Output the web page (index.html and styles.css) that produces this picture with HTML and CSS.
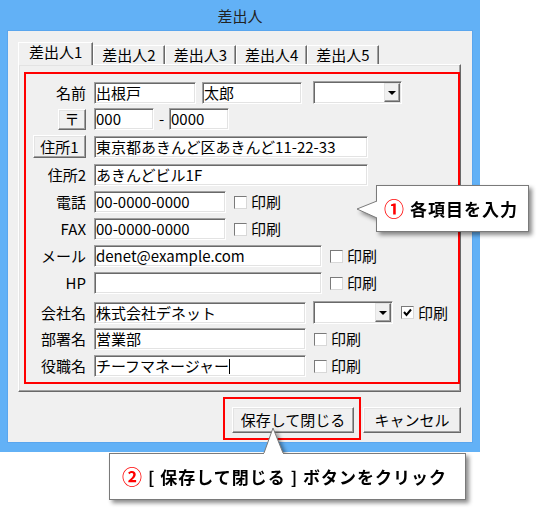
FILE: index.html
```html
<!DOCTYPE html>
<html lang="ja">
<head>
    <meta charset="UTF-8">
    <title>差出人</title>
    <link rel="stylesheet" href="styles.css">
</head>
<body>
    <div class="window">
        <div class="titlebar">差出人</div>
        <div class="client">
            <div class="tabs">
                <div class="tab active">差出人1</div>
                <div class="tab">差出人2</div>
                <div class="tab">差出人3</div>
                <div class="tab">差出人4</div>
                <div class="tab">差出人5</div>
            </div>
            <div class="tab-panel">
                <div class="form">
                    <div class="row">
                        <span class="label">名前</span>
                        <div class="fields">
                            <div class="field w-sei">出根戸</div>
                            <div class="field w-mei">太郎</div>
                            <div class="select w-sel-name"><span class="drop"></span></div>
                        </div>
                    </div>
                    <div class="row">
                        <span class="label"><button class="btn btn-zip">〒</button></span>
                        <div class="fields">
                            <div class="field w-zip">000</div>
                            <span class="dash">-</span>
                            <div class="field w-zip">0000</div>
                        </div>
                    </div>
                    <div class="row">
                        <span class="label"><button class="btn btn-addr">住所1</button></span>
                        <div class="fields">
                            <div class="field w-addr">東京都あきんど区あきんど11-22-33</div>
                        </div>
                    </div>
                    <div class="row spaced">
                        <span class="label">住所2</span>
                        <div class="fields">
                            <div class="field w-addr">あきんどビル1F</div>
                        </div>
                    </div>
                    <div class="row">
                        <span class="label">電話</span>
                        <div class="fields">
                            <div class="field w-tel">00-0000-0000</div>
                            <label class="check"><span class="box"></span>印刷</label>
                        </div>
                    </div>
                    <div class="row">
                        <span class="label">FAX</span>
                        <div class="fields">
                            <div class="field w-tel">00-0000-0000</div>
                            <label class="check"><span class="box"></span>印刷</label>
                        </div>
                    </div>
                    <div class="row">
                        <span class="label">メール</span>
                        <div class="fields">
                            <div class="field w-mail">denet@example.com</div>
                            <label class="check"><span class="box"></span>印刷</label>
                        </div>
                    </div>
                    <div class="row">
                        <span class="label">HP</span>
                        <div class="fields">
                            <div class="field w-mail"></div>
                            <label class="check"><span class="box"></span>印刷</label>
                        </div>
                    </div>
                    <div class="row spaced">
                        <span class="label">会社名</span>
                        <div class="fields">
                            <div class="field w-org">株式会社デネット</div>
                            <div class="select w-sel-org"><span class="drop"></span></div>
                            <label class="check"><span class="box">
                                <svg width="9" height="9" viewBox="0 0 9 9"><polyline points="1,4 3.5,7 8,1.5" fill="none" stroke="#000" stroke-width="2"/></svg>
                            </span>印刷</label>
                        </div>
                    </div>
                    <div class="row">
                        <span class="label">部署名</span>
                        <div class="fields">
                            <div class="field w-org">営業部</div>
                            <label class="check"><span class="box"></span>印刷</label>
                        </div>
                    </div>
                    <div class="row">
                        <span class="label">役職名</span>
                        <div class="fields">
                            <div class="field w-org">チーフマネージャー<span class="caret"></span></div>
                            <label class="check"><span class="box"></span>印刷</label>
                        </div>
                    </div>
                </div>
            </div>
            <div class="actions">
                <span class="mark"><button class="btn btn-save">保存して閉じる</button></span>
                <button class="btn btn-cancel">キャンセル</button>
            </div>
        </div>
    </div>

    <!-- 吹き出し -->
    <div class="callout callout-input">
        <svg class="tail tail-left" width="23" height="20" viewBox="0 0 23 20">
            <polygon points="1,9 21,1 23,1 23,18 21,18" fill="#fff"/>
            <polyline points="21,1 1,9 21,18" fill="none" stroke="#7a7a7a"/>
        </svg>
        <span class="num">①</span><span class="text">各項目を入力</span>
    </div>
    <div class="callout callout-save">
        <svg class="tail tail-up" width="22" height="29" viewBox="0 0 22 29">
            <polygon points="10,1 20,26 20,29 1,29 1,26" fill="#fff"/>
            <polyline points="1,26 10,1 20,26" fill="none" stroke="#7a7a7a"/>
        </svg>
        <span class="num">②</span><span class="text">[ 保存して閉じる ] ボタンをクリック</span>
    </div>
</body>
</html>
```

FILE: styles.css
```css
* {
    margin: 0;
    padding: 0;
    box-sizing: border-box;
}

body {
    background: #fff;
    font-family: "Noto Sans CJK JP", "Noto Sans", sans-serif;
    font-size: 15px;
    color: #000;
}

.window {
    width: 480px;
    height: 452px;
    background: #62b1f6;
    padding: 0 7px;
}

.titlebar {
    height: 30px;
    line-height: 32px;
    text-align: center;
    color: #222;
}

.client {
    height: 413px;
    background: #f0f0f0;
    border: 1px solid #5aa6ee;
    padding: 11px 11px 0 10px;
}

/* タブ */
.tabs {
    display: flex;
    align-items: flex-end;
    height: 22px;
}

.tab {
    height: 19px;
    padding: 0 8px;
    line-height: 17px;
    background: #f0f0f0;
    border: 1px solid;
    border-bottom: none;
    border-color: #fff #696969 #fff #fff;
    box-shadow: inset -1px 0 #a0a0a0;
}

.tab.active {
    position: relative;
    z-index: 1;
    height: 23px;
    margin-bottom: -1px;
    padding: 0 10px;
    line-height: 18px;
}

.tab-panel {
    height: 328px;
    background: #f0f0f0;
    border: 1px solid;
    border-color: #fff #696969 #696969 #fff;
    box-shadow: inset -1px -1px #a0a0a0, inset 1px 1px #e3e3e3;
    padding: 7px 0 0 5px;
}

/* 赤枠 */
.form {
    width: 436px;
    height: 312px;
    border: 2px solid #f00;
    padding-top: 7px;
    display: flex;
    flex-direction: column;
    gap: 5px;
}

.row {
    display: grid;
    grid-template-columns: 60px 1fr;
    column-gap: 8px;
    height: 22px;
    align-items: center;
}

.row.spaced {
    margin-top: 2px;
}

.label {
    display: flex;
    justify-content: flex-end;
    align-items: center;
    white-space: nowrap;
    line-height: 20px;
}

.fields {
    display: flex;
    align-items: center;
    gap: 6px;
}

.field {
    height: 22px;
    background: #fff;
    border: 1px solid;
    border-color: #a0a0a0 #fff #fff #a0a0a0;
    box-shadow: inset 1px 1px #696969, inset -1px -1px #e3e3e3;
    padding: 0 1px;
    line-height: 20px;
    white-space: nowrap;
    overflow: hidden;
}

.w-sei { width: 102px; }
.w-mei { width: 100px; }
.w-zip { width: 60px; }
.w-addr { width: 274px; }
.w-tel { width: 132px; }
.w-mail { width: 228px; }
.w-org { width: 212px; }
.w-sel-name { width: 89px; margin-left: 5px; }
.w-sel-org { width: 80px; margin-left: 1px; }

.dash {
    width: 3px;
    display: flex;
    justify-content: center;
    line-height: 20px;
}

.caret {
    display: inline-block;
    width: 1px;
    height: 15px;
    background: #000;
    vertical-align: -2px;
}

.select {
    height: 23px;
    background: #fff;
    border: 1px solid;
    border-color: #a0a0a0 #fff #fff #a0a0a0;
    box-shadow: inset 1px 1px #696969, inset -1px -1px #e3e3e3;
    padding: 1px;
    display: flex;
    justify-content: flex-end;
}

.drop {
    width: 16px;
    background: #f0f0f0;
    border: 1px solid;
    border-color: #e3e3e3 #696969 #696969 #e3e3e3;
    box-shadow: inset -1px -1px #a0a0a0;
    display: flex;
    justify-content: center;
    align-items: center;
}

.drop::after {
    content: "";
    width: 0;
    height: 0;
    border-left: 4px solid transparent;
    border-right: 4px solid transparent;
    border-top: 4px solid #000;
}

.check {
    display: flex;
    align-items: center;
    gap: 4px;
    margin-left: 2px;
    white-space: nowrap;
    line-height: 20px;
}

.box {
    width: 13px;
    height: 13px;
    background: #fff;
    border: 1px solid;
    border-color: #7a7a7a #d8d8d8 #d8d8d8 #7a7a7a;
    display: flex;
    justify-content: center;
    align-items: center;
}

/* ボタン */
.btn {
    font: inherit;
    color: #000;
    background: #f0f0f0;
    border: 1px solid;
    border-color: #fff #696969 #696969 #fff;
    box-shadow: inset -1px -1px #a0a0a0, inset 1px 1px #e3e3e3;
    line-height: 18px;
    padding: 0;
}

.btn-zip {
    width: 28px;
    height: 21px;
}

.btn-addr {
    width: 53px;
    height: 23px;
}

.actions {
    display: flex;
    justify-content: flex-end;
    align-items: flex-start;
    margin-top: 5px;
}

.mark {
    display: flex;
    border: 2px solid #f00;
    padding: 8px 5px 5px 7px;
}

.btn-save {
    width: 122px;
    height: 26px;
}

.btn-cancel {
    width: 98px;
    height: 26px;
    margin: 10px 0 0 2px;
}

/* 吹き出し */
.callout {
    position: absolute;
    height: 47px;
    background: #fff;
    border: 1px solid #7a7a7a;
    filter: drop-shadow(3px 3px 2px rgba(0, 0, 0, 0.45));
    display: flex;
    align-items: center;
    font-size: 17px;
    font-weight: bold;
    letter-spacing: 1px;
    white-space: nowrap;
    line-height: 22px;
}

.callout .num {
    color: #f00;
    font-size: 20px;
    letter-spacing: 0;
    margin-right: 6px;
}

.callout-input {
    left: 376px;
    top: 185px;
    width: 153px;
    padding-left: 7px;
}

.callout-save {
    left: 109px;
    top: 453px;
    width: 357px;
    padding-left: 12px;
}

.tail {
    position: absolute;
}

.tail-left {
    left: -21px;
    top: 14px;
}

.tail-up {
    left: 153px;
    top: -27px;
}
```
